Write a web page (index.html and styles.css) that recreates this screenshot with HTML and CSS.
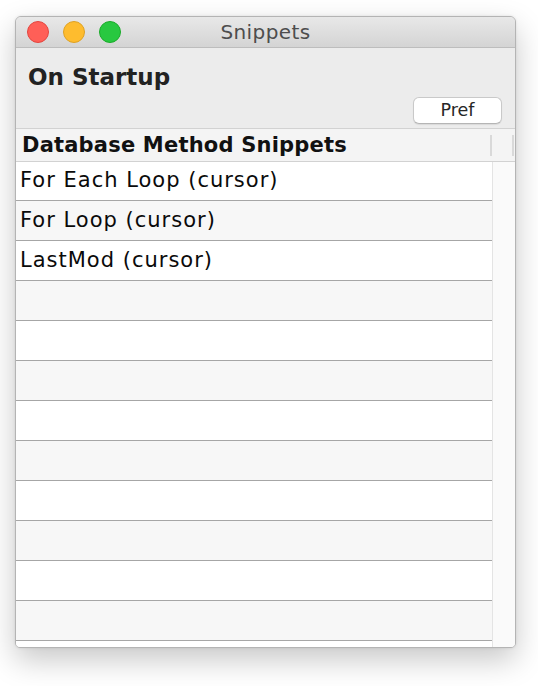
FILE: index.html
```html
<!DOCTYPE html>
<html lang="en">
<head>
<meta charset="utf-8">
<title>Snippets</title>
<link rel="stylesheet" href="styles.css">
</head>
<body>
<div class="window">
  <div class="titlebar">
    <div class="lights">
      <span class="light red"></span>
      <span class="light yellow"></span>
      <span class="light green"></span>
    </div>
    <div class="title">Snippets</div>
    <div class="spacer"></div>
  </div>
  <div class="panel">
    <h1 class="heading">On Startup</h1>
    <div class="actions"><button class="btn">Pref</button></div>
  </div>
  <div class="thead">
    <div class="th">Database Method Snippets</div>
    <span class="sep"></span>
    <span class="sep sep-last"></span>
  </div>
  <div class="tbody">
    <div class="rows">
      <div class="row">For Each Loop (cursor)</div>
      <div class="row">For Loop (cursor)</div>
      <div class="row">LastMod (cursor)</div>
      <div class="row"></div>
      <div class="row"></div>
      <div class="row"></div>
      <div class="row"></div>
      <div class="row"></div>
      <div class="row"></div>
      <div class="row"></div>
      <div class="row"></div>
      <div class="row"></div>
      <div class="row"></div>
    </div>
    <div class="scroller"></div>
  </div>
</div>
</body>
</html>
```

FILE: styles.css
```css
* { box-sizing: border-box; }

html, body {
  margin: 0;
  background: #ffffff;
}

body {
  min-height: 686px;
  padding: 16px 0 0 15px;
  font-family: "DejaVu Sans", "Liberation Sans", sans-serif;
  color: #000;
}

.window {
  width: 501px;
  height: 632px;
  border: 1px solid #b4b4b4;
  border-radius: 6px 6px 5px 5px;
  overflow: hidden;
  background: #ececec;
  display: flex;
  flex-direction: column;
  box-shadow: 0 12px 30px rgba(0, 0, 0, 0.22), 0 0 3px rgba(0, 0, 0, 0.1);
}

.titlebar {
  height: 31px;
  flex: none;
  display: grid;
  grid-template-columns: 1fr auto 1fr;
  align-items: center;
  background: linear-gradient(#e8e8e8, #d4d4d4);
  border-bottom: 1px solid #bdbdbd;
}

.lights {
  display: flex;
  gap: 14px;
  padding-left: 11px;
}

.light {
  width: 22px;
  height: 22px;
  border-radius: 50%;
  display: block;
}

.red { background: #ff5f57; border: 1px solid #e2463f; }
.yellow { background: #febc2e; border: 1px solid #dea123; }
.green { background: #28c840; border: 1px solid #1aab29; }

.title {
  font-size: 20px;
  line-height: 30px;
  letter-spacing: 0.4px;
  color: #4d4d4d;
}

.panel {
  height: 80px;
  flex: none;
  padding: 0 13px 0 12px;
  display: flex;
  flex-direction: column;
}

.heading {
  margin: 15px 0 0;
  font-size: 23px;
  line-height: 28px;
  font-weight: bold;
  color: #222;
}

.actions {
  display: flex;
  justify-content: flex-end;
  margin-top: 6px;
}

.btn {
  width: 89px;
  height: 27px;
  padding: 0;
  border: 1px solid #c9c9c9;
  border-bottom-color: #b5b5b5;
  border-radius: 6px;
  background: #ffffff;
  font-family: "DejaVu Sans", sans-serif;
  font-size: 17.5px;
  line-height: 25px;
  color: #262626;
  box-shadow: 0 1px 1px rgba(0, 0, 0, 0.08);
}

.thead {
  height: 34px;
  flex: none;
  display: flex;
  align-items: center;
  background: #f4f4f4;
  border-top: 1px solid #d2d2d2;
  border-bottom: 1px solid #d2d2d2;
}

.th {
  width: 474px;
  padding-left: 6px;
  font-size: 21px;
  line-height: 32px;
  letter-spacing: 0.2px;
  font-weight: bold;
  color: #111;
}

.sep {
  width: 2px;
  height: 21px;
  background: #d9d9d9;
  margin-right: 20px;
}

.sep-last { margin-right: 0; }

.tbody {
  flex: 1;
  display: flex;
  overflow: hidden;
}

.rows {
  width: 476px;
  flex: none;
}

.row {
  height: 40px;
  padding-left: 4px;
  border-bottom: 1px solid #a6a6a6;
  font-size: 21px;
  line-height: 38px;
  letter-spacing: 1px;
  color: #0a0a0a;
  background: #ffffff;
  white-space: nowrap;
}

.row:first-child {
  height: 39px;
  line-height: 37px;
}

.row:nth-child(even) { background: #f7f7f7; }

.scroller {
  flex: 1;
  background: #fafafa;
  border-left: 1px solid #e4e4e4;
}
```
